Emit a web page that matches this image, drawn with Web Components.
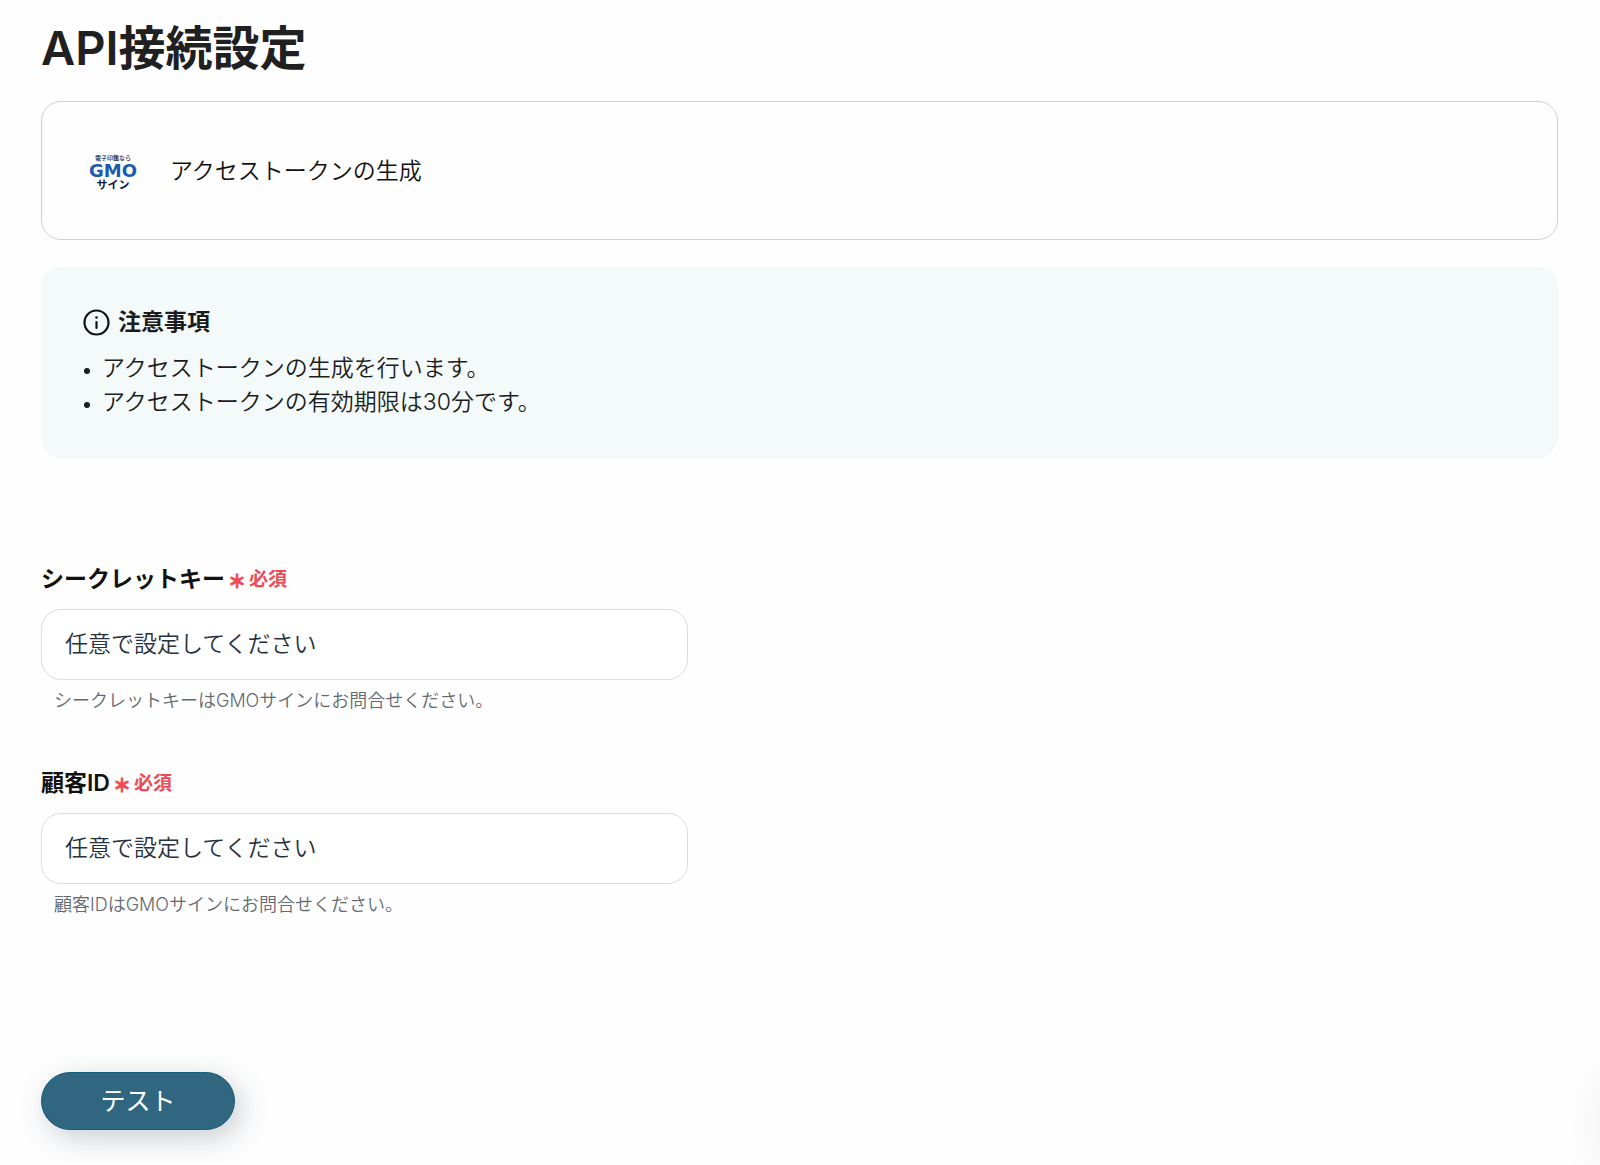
<!DOCTYPE html>
<html lang="ja">
<head>
<meta charset="utf-8">
<meta name="viewport" content="width=device-width, initial-scale=1">
<title>API接続設定</title>
<style>
  body {
    margin: 0;
    background: #fefefe;
    color: #1c1c1c;
    font-family: Inter, "Noto Sans CJK JP", sans-serif;
    font-size: 23px;
    font-weight: 350;
    line-height: 34px;
    overflow-x: hidden;
  }
</style>
</head>
<body>
<settings-page>
  <span slot="title">API接続設定</span>
  <service-card><gmo-logo slot="logo"></gmo-logo>アクセストークンの生成</service-card>
  <notice-box heading="注意事項">
    <notice-item>アクセストークンの生成を行います。</notice-item>
    <notice-item>アクセストークンの有効期限は30分です。</notice-item>
  </notice-box>
  <form-field slot="fields" label="シークレットキー" name="secret" placeholder="任意で設定してください">シークレットキーはGMOサインにお問合せください。</form-field>
  <form-field slot="fields" label="顧客ID" name="customer" placeholder="任意で設定してください">顧客IDはGMOサインにお問合せください。</form-field>
  <action-button slot="actions">テスト</action-button>
</settings-page>
<side-launcher></side-launcher>

<script>
  class BaseElement extends HTMLElement {
    render(html) {
      const root = this.attachShadow({ mode: 'open' });
      const template = document.createElement('template');
      template.innerHTML = html;
      root.append(template.content.cloneNode(true));
      return root;
    }
  }

  customElements.define('settings-page', class extends BaseElement {
    constructor() {
      super();
      this.render(`
        <style>
          :host { display: block; padding: 16px 42px 32px 41px; }
          h1 { margin: 0 0 21px; font-size: 47px; line-height: 64px; font-weight: 600; color: #202020; }
          .panels { display: flex; flex-direction: column; gap: 27px; }
          .fields { display: flex; flex-direction: column; gap: 51px; margin-top: 104px; }
          .actions { margin-top: 153px; }
        </style>
        <main>
          <h1><slot name="title"></slot></h1>
          <div class="panels"><slot></slot></div>
          <div class="fields"><slot name="fields"></slot></div>
          <div class="actions"><slot name="actions"></slot></div>
        </main>`);
    }
  });

  customElements.define('service-card', class extends BaseElement {
    constructor() {
      super();
      this.render(`
        <style>
          :host {
            display: flex; align-items: center; gap: 29px;
            padding: 42px 43px;
            border: 1px solid #d0d0d0; border-radius: 20px; color: #111;
          }
          p { margin: 0; }
        </style>
        <slot name="logo"></slot>
        <p><slot></slot></p>`);
    }
  });

  customElements.define('gmo-logo', class extends BaseElement {
    constructor() {
      super();
      this.render(`
        <style>
          :host {
            display: flex; flex-direction: column; align-items: center; justify-content: flex-end;
            box-sizing: border-box; width: 56px; height: 53px; padding-bottom: 7px;
            color: #10183a; white-space: nowrap;
          }
          .lead { font-size: 6px; line-height: 8px; font-weight: 500; }
          .brand { font: 700 18px/18px "DejaVu Sans", sans-serif; color: #1a5bb0; }
          .name { font-size: 11px; line-height: 10px; font-weight: 700; }
        </style>
        <span class="lead">電子印鑑なら</span>
        <span class="brand">GMO</span>
        <span class="name">サイン</span>`);
    }
  });

  customElements.define('notice-box', class extends BaseElement {
    constructor() {
      super();
      const root = this.render(`
        <style>
          :host {
            display: block; padding: 38px 42px 39px 42px;
            border-radius: 20px; background: #f4fafa;
          }
          h2 {
            display: flex; align-items: center; gap: 8px;
            margin: 0 0 12px; font-size: 23px; line-height: 34px; font-weight: 600;
          }
          svg { display: block; }
          .list { display: flex; flex-direction: column; }
        </style>
        <h2>
          <svg width="27" height="27" viewBox="0 0 27 27" fill="none" stroke="#111" stroke-width="2.2" stroke-linecap="round" aria-hidden="true">
            <circle cx="13.5" cy="13.5" r="12"/>
            <path d="M13.5 13v6"/>
            <circle cx="13.5" cy="8.5" r="1.3" fill="#111" stroke="none"/>
          </svg>
          <span class="heading"></span>
        </h2>
        <div class="list" role="list"><slot></slot></div>`);
      root.querySelector('.heading').textContent = this.getAttribute('heading');
    }
  });

  customElements.define('notice-item', class extends BaseElement {
    constructor() {
      super();
      this.render(`
        <style>
          :host { display: flex; align-items: center; gap: 12px; }
          i { flex: none; width: 6px; height: 6px; margin: 5px 0 0 1px; border-radius: 50%; background: #1c1c1c; }
        </style>
        <i></i><span><slot></slot></span>`);
    }
    connectedCallback() { this.setAttribute('role', 'listitem'); }
  });

  customElements.define('form-field', class extends BaseElement {
    constructor() {
      super();
      const root = this.render(`
        <style>
          :host { display: block; max-width: 647px; }
          .head { display: flex; align-items: center; gap: 3px; height: 34px; margin-bottom: 13px; }
          label { font-weight: 600; color: #111; }
          .required { display: flex; gap: 3px; padding-top: 3px; font-size: 19px; line-height: 32px; font-weight: 600; color: #ef4b55; }
          .mark { padding-top: 2px; font-size: 18px; -webkit-text-stroke: 1px currentColor; }
          input {
            display: block; box-sizing: border-box; width: 100%; height: 71px; margin: 0;
            padding: 0 23px 1px; border: 1px solid #dadce2; border-radius: 20px;
            background: #fff; color: #27323e; font: inherit; outline: none;
          }
          input::placeholder { color: #27323e; opacity: 1; }
          p { margin: 7px 0 0 13px; font-size: 18px; line-height: 28px; color: #626a73; }
        </style>
        <div class="head">
          <label for="control"></label>
          <span class="required"><span class="mark">＊</span><span>必須</span></span>
        </div>
        <input id="control" type="text" required aria-describedby="help">
        <p id="help"><slot></slot></p>`);
      const input = root.querySelector('input');
      root.querySelector('label').textContent = this.getAttribute('label');
      input.name = this.getAttribute('name');
      input.placeholder = this.getAttribute('placeholder');
    }
  });

  customElements.define('action-button', class extends BaseElement {
    constructor() {
      super();
      this.render(`
        <style>
          :host { display: inline-flex; }
          button {
            min-width: 194px; height: 58px; padding: 0 32px;
            border: 1px solid #14607b; border-radius: 29px;
            background: #30667f; color: #fff; font: inherit; font-size: 25px; font-weight: 400; cursor: pointer;
            box-shadow: 6px 8px 30px rgba(30, 50, 70, .24);
          }
        </style>
        <button type="button"><slot></slot></button>`);
    }
  });

  /* Launcher docked past the right edge; only its soft shadow shows. */
  customElements.define('side-launcher', class extends BaseElement {
    constructor() {
      super();
      this.render(`
        <style>
          :host {
            display: block; position: fixed; right: -92px; bottom: 0;
            width: 80px; height: 80px; border-radius: 50%;
            box-shadow: 0 0 60px rgba(0, 0, 0, .14);
          }
        </style>`);
    }
  });
</script>
</body>
</html>
